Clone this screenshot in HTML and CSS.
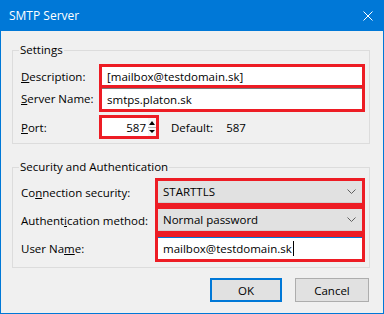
FILE: index.html
```html
<!DOCTYPE html>
<html lang="en">
<head>
  <meta charset="UTF-8" />
  <title>SMTP Server</title>
  <link rel="stylesheet" href="styles.css">
</head>
<body>
  <div class="window">
    <div class="titlebar">
      <span class="title">SMTP Server</span>
      <svg class="close" width="10" height="10" viewBox="0 0 10 10">
        <path d="M0.5 0.5 L9.5 9.5 M9.5 0.5 L0.5 9.5" stroke="#fff" stroke-width="1" fill="none" />
      </svg>
    </div>

    <div class="content">
      <fieldset class="group settings">
        <legend>Settings</legend>
        <div class="rows">
          <div class="row row-desc">
            <span class="label"><u>D</u>escription:</span>
            <div class="mark wide">
              <div class="field">[mailbox@testdomain.sk]</div>
            </div>
          </div>
          <div class="row row-server">
            <span class="label"><u>S</u>erver Name:</span>
            <div class="mark wide">
              <div class="field edged">smtps.platon.sk</div>
            </div>
          </div>
          <div class="row row-port">
            <span class="label"><u>P</u>ort:</span>
            <div class="mark port">
              <div class="field num">
                <span>587</span>
                <svg class="spin" width="8" height="18" viewBox="0 0 8 18">
                  <rect x="0" y="0" width="8" height="18" fill="#f7f7f7" />
                  <path d="M4 3 L7 7 L1 7 Z" fill="#000" />
                  <line x1="0" y1="9.5" x2="8" y2="9.5" stroke="#b4b4b4" />
                  <path d="M1 12 L7 12 L4 15 Z" fill="#000" />
                </svg>
              </div>
            </div>
            <span class="def">Default:</span>
            <span class="def-val">587</span>
          </div>
        </div>
      </fieldset>

      <fieldset class="group security">
        <legend>Security and Authentication</legend>
        <div class="rows">
          <div class="row sec-row">
            <span class="label sec-label">Co<u>n</u>nection security:</span>
            <div class="mark sec">
              <div class="select">
                <span>STARTTLS</span>
                <svg class="chev" width="9" height="5" viewBox="0 0 9 5">
                  <path d="M0.5 0.5 L4.5 4.5 L8.5 0.5" stroke="#606060" fill="none" />
                </svg>
              </div>
            </div>
          </div>
          <div class="row sec-row">
            <span class="label sec-label">Authent<u>i</u>cation method:</span>
            <div class="mark sec">
              <div class="select">
                <span>Normal password</span>
                <svg class="chev" width="9" height="5" viewBox="0 0 9 5">
                  <path d="M0.5 0.5 L4.5 4.5 L8.5 0.5" stroke="#606060" fill="none" />
                </svg>
              </div>
            </div>
          </div>
          <div class="row sec-row">
            <span class="label sec-label">User Na<u>m</u>e:</span>
            <div class="mark sec">
              <div class="field focus">mailbox@testdomain.sk<span class="caret"></span></div>
            </div>
          </div>
        </div>
      </fieldset>

      <div class="buttons">
        <button class="btn btn-default">OK</button>
        <button class="btn">Cancel</button>
      </div>
    </div>
  </div>
</body>
</html>
```

FILE: styles.css
```css
* {
  box-sizing: border-box;
}

body {
  margin: 0;
  font-family: "Open Sans", "Noto Sans", sans-serif;
  font-size: 11.5px;
  color: #000;
}

.window {
  width: 384px;
  height: 314px;
  border: 1px solid #0078d7;
  border-top: 0;
  background: #f0f0f0;
}

.titlebar {
  height: 31px;
  margin: 0 -1px;
  padding: 0 11px 0 9px;
  background: #0078d7;
  color: #fff;
  font-size: 12px;
  display: flex;
  align-items: center;
  justify-content: space-between;
}

.close {
  display: block;
}

.content {
  padding: 11px 13px 0 11px;
}

.group {
  margin: 0;
  padding: 0;
  min-width: 0;
  border: 1px solid #dcdcdc;
}

.group legend {
  margin-left: 6px;
  padding: 0 1px;
  line-height: 16px;
}

.security {
  margin-top: 15px;
}

.rows {
  padding: 6px 4px 4px 8px;
}

.security .rows {
  padding: 3px 4px 5px 8px;
}

.row {
  display: flex;
  align-items: center;
}

.label {
  width: 78px;
  flex-shrink: 0;
}

.sec-label {
  width: 134px;
}

.mark {
  border: 3px solid #ed1c24;
  display: flex;
}

.wide {
  flex: 1;
}

.row-desc .mark {
  height: 24px;
}

.row-server {
  margin-top: -3px;
}

.row-server .mark {
  height: 27px;
}

.row-port {
  margin-top: 3px;
}

.port {
  width: 60px;
  height: 24px;
}

.field {
  flex: 1;
  background: #fff;
  padding: 0 5px;
  display: flex;
  align-items: center;
  white-space: nowrap;
}

.edged {
  border-top: 1px solid #7a7a7a;
}

.num {
  justify-content: flex-end;
  padding: 0 0 0 4px;
  gap: 2px;
}

.spin {
  display: block;
}

.def {
  margin-left: 12px;
}

.def-val {
  margin-left: 13px;
}

.sec-row .mark {
  height: 28px;
}

.sec {
  flex: 1;
}

.select {
  flex: 1;
  background: #e1e1e1;
  border-bottom: 1px solid #d0d0d0;
  padding: 0 6px 0 5px;
  display: flex;
  align-items: center;
  justify-content: space-between;
}

.chev {
  display: block;
}

.focus {
  border-top: 1px solid #0078d7;
}

.caret {
  display: inline-block;
  width: 1px;
  height: 15px;
  background: #000;
  margin-left: 1px;
}

.buttons {
  margin-top: 10px;
  padding-right: 1px;
  display: flex;
  justify-content: flex-end;
  gap: 13px;
}

.btn {
  width: 74px;
  height: 24px;
  padding: 0;
  background: #e1e1e1;
  border: 1px solid #adadad;
  font-family: inherit;
  font-size: 11.5px;
  color: #000;
}

.btn-default {
  width: 72px;
  border: 2px solid #0078d7;
}
```
